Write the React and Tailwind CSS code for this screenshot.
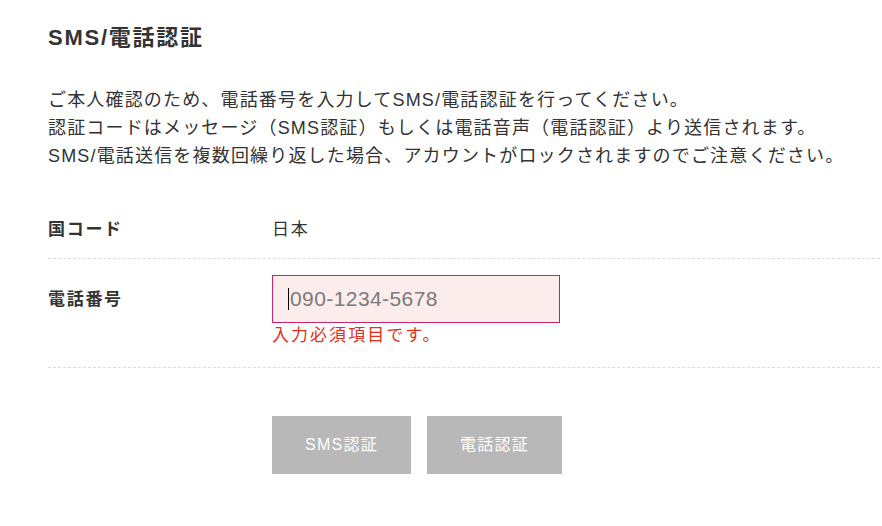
export default function App() {
  return (
    <div className="min-h-[526px] bg-white pl-[48px] pt-[24px] font-['Liberation_Sans','Noto_Sans_CJK_JP',sans-serif] text-[#333]">
      <h1 className="text-[22px] font-bold leading-[28px] tracking-[0.08em]">SMS/電話認証</h1>

      <div className="mt-[34px] text-[18px] leading-[28px] tracking-[0.065em]">
        <p>ご本人確認のため、電話番号を入力してSMS/電話認証を行ってください。</p>
        <p>認証コードはメッセージ（SMS認証）もしくは電話音声（電話認証）より送信されます。</p>
        <p>SMS/電話送信を複数回繰り返した場合、アカウントがロックされますのでご注意ください。</p>
      </div>

      <div className="mt-[17px] w-[832px]">
        <div className="flex h-[72px] items-center border-b border-dashed border-[#dcdcdc] pt-[14px] text-[17px] tracking-[0.1em]">
          <div className="w-[224px] font-bold">国コード</div>
          <div>日本</div>
        </div>

        <div className="flex border-b border-dashed border-[#dcdcdc] pb-[20px] pt-[16px]">
          <div className="w-[224px] pt-[12px] text-[17px] font-bold tracking-[0.1em]">電話番号</div>
          <div>
            <div className="relative">
              <input
                type="tel"
                placeholder="090-1234-5678"
                className="h-[48px] w-[288px] border border-[#c9246a] bg-[#fcecec] px-[17px] text-[21px] tracking-[0.02em] text-[#333] outline-none placeholder:text-[#7a7a7a]"
              />
              <span className="pointer-events-none absolute left-[16px] top-[13px] h-[22px] w-px bg-black" />
            </div>
            <p className="mt-[2px] text-[17px] leading-[22px] tracking-[0.12em] text-[#e2301e]">入力必須項目です。</p>
          </div>
        </div>
      </div>

      <div className="ml-[224px] mt-[48px] flex gap-[16px]">
        <button className="h-[58px] w-[139px] bg-[#b8b8b8] text-[16px] tracking-[0.08em] text-white">SMS認証</button>
        <button className="h-[58px] w-[135px] bg-[#b8b8b8] text-[16px] tracking-[0.08em] text-white">電話認証</button>
      </div>
    </div>
  );
}
